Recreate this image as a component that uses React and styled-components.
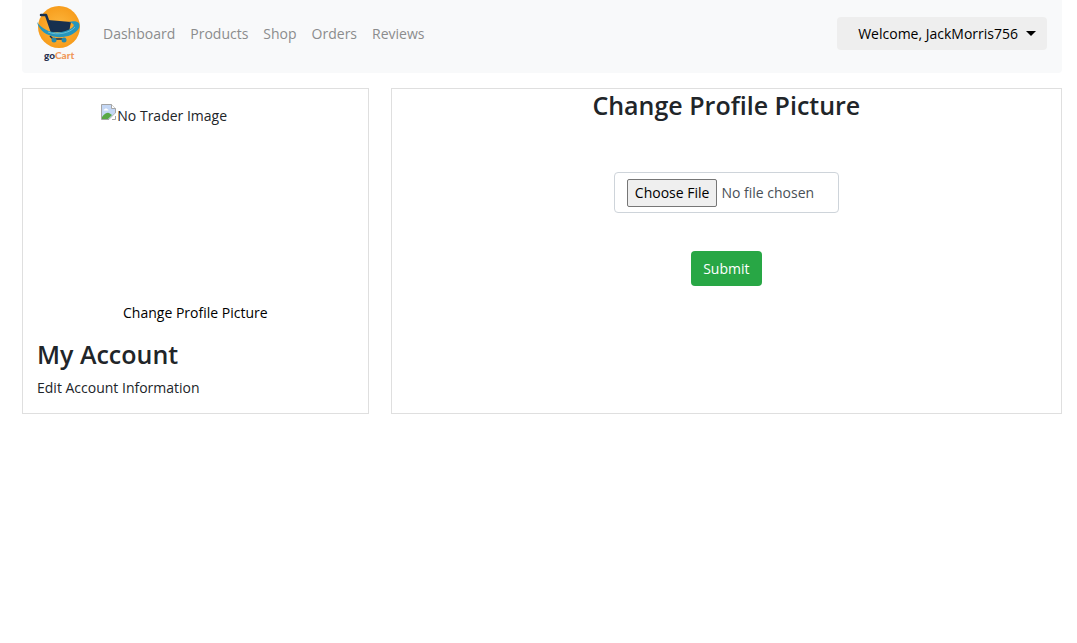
import React from "react";
import styled, { createGlobalStyle } from "styled-components";

const GlobalStyle = createGlobalStyle`
  *, *::before, *::after { box-sizing: border-box; }
  body {
    margin: 0;
    background: #fff;
    color: #212529;
    font-family: "Open Sans", "Noto Sans", sans-serif;
    font-size: 14px;
    font-weight: 400;
    line-height: 22px;
  }
`;

const Page = styled.div`
  padding: 0 15px 0 22px;
`;

const Navbar = styled.nav`
  display: flex;
  align-items: center;
  height: 73px;
  padding: 0 15px 6px;
  background: #f8f9fa;
  border-radius: 0 0 4px 4px;
`;

const Brand = styled.a`
  display: block;
  height: 62px;
  margin-right: 22px;
`;

const NavList = styled.ul`
  display: flex;
  gap: 15px;
  flex: 1;
  margin: 0;
  padding: 0;
  list-style: none;
`;

const NavLink = styled.a`
  color: #8b8c8d;
  text-decoration: none;
`;

const UserButton = styled.button`
  display: flex;
  align-items: center;
  justify-content: flex-end;
  gap: 8px;
  width: 210px;
  height: 33px;
  padding: 0 11px;
  border: 0;
  border-radius: 4px;
  background: #eee;
  color: #000;
  font: inherit;
`;

const Caret = styled.span`
  border: 5px solid transparent;
  border-top-color: #000;
  border-bottom: 0;
`;

const Columns = styled.main`
  display: grid;
  grid-template-columns: calc(100% / 3) 1fr;
  gap: 22px;
  margin-top: 15px;
`;

const Card = styled.section`
  display: flex;
  flex-direction: column;
  align-items: ${(p) => (p.$centered ? "center" : "stretch")};
  min-height: 326px;
  padding: ${(p) => (p.$centered ? "0 14px" : "15px 14px 14px")};
  border: 1px solid #dfdfdf;
`;

const Portrait = styled.div`
  display: flex;
  align-items: flex-start;
  align-self: center;
  width: 188px;
  height: 188px;
  line-height: 24px;
`;

const TextLink = styled.a`
  align-self: ${(p) => (p.$centered ? "center" : "flex-start")};
  margin-top: ${(p) => (p.$centered ? "10px" : "7px")};
  color: ${(p) => (p.$centered ? "#000" : "#212529")};
  text-decoration: none;
`;

const Heading = styled.h2`
  margin: ${(p) => p.$top || "0"} 0 0;
  font-size: 25px;
  font-weight: 600;
  line-height: 32px;
`;

const UploadForm = styled.form`
  display: flex;
  flex-direction: column;
  align-items: center;
  gap: 38px;
  margin-top: 51px;
`;

const FileInput = styled.input`
  width: 225px;
  height: 41px;
  padding: 6px 12px;
  border: 1px solid #ced4da;
  border-radius: 4px;
  background: #fff;
  color: #495057;
  font: inherit;

  &::file-selector-button {
    height: 28px;
    margin: 0 4px 0 0;
    padding: 0 7px;
    border: 1px solid #767676;
    border-radius: 2px;
    background: #efefef;
    color: #000;
    font: inherit;
  }
`;

const SubmitButton = styled.button`
  width: 71px;
  height: 35px;
  padding: 0;
  border: 0;
  border-radius: 4px;
  background: #28a745;
  color: #fff;
  font: inherit;
`;

function Logo() {
  return (
    <svg width="44" height="60" viewBox="0 0 44 60" role="img" aria-label="goCart">
      <defs>
        <radialGradient id="sun">
          <stop offset="0" stopColor="#fdb840" />
          <stop offset="1" stopColor="#f79d1c" />
        </radialGradient>
      </defs>
      <circle cx="22" cy="24" r="21" fill="url(#sun)" />
      <path d="M11 17 L34 19 L32 29 L15 29 Z" fill="#17304f" />
      <path d="M4 12 H9 L15 29" fill="none" stroke="#17304f" strokeWidth="2.500" strokeLinecap="round" strokeLinejoin="round" />
      <path d="M13 33 L16 36 H28" fill="none" stroke="#17304f" strokeWidth="1.500" />
      <path d="M0 19 C7 29 20 32 31 27 C38 24 39 21 32 19 C40 17 44 20 42 25 C38 32 28 35 20 34 C9 33 2 27 0 19 Z" fill="#2596bd" />
      <path d="M11 29 C20 33 33 30 38 24" fill="none" stroke="#68bdd3" strokeWidth="1" />
      <circle cx="17" cy="37" r="2.500" fill="#2789ab" />
      <circle cx="27" cy="37" r="2.500" fill="#2789ab" />
      <text x="7" y="56" fontFamily="Lato, sans-serif" fontSize="10" fontWeight="900" fill="#29304f">
        go<tspan fill="#f0995c">Cart</tspan>
      </text>
    </svg>
  );
}

function BrokenImage() {
  return (
    <svg width="16" height="16" viewBox="0 0 16 16" aria-hidden="true">
      <path d="M.5 .5 H10.500 L14.500 4.500 V9 L8 15.500 H.5 Z" fill="#c4d7f5" stroke="#a5a5a5" />
      <path d="M10.500 .5 V4.500 H14.500" fill="#fff" stroke="#a5a5a5" />
      <path d="M2.500 6.500 Q2.500 5 4 5 Q5 3.500 6 5 Q7.500 5 7.500 6.500 Z" fill="#fff" />
      <path d="M1 15 V13 Q5 8 8 9 L11 11 L7 15 Z" fill="#58a846" />
      <path d="M8 16 L15 9 V11 L10 16 Z" fill="#fff" />
      <path d="M11 15.500 H14.500 V12" fill="none" stroke="#a5a5a5" />
    </svg>
  );
}

const links = ["Dashboard", "Products", "Shop", "Orders", "Reviews"];

export default function App() {
  return (
    <>
      <GlobalStyle />
      <Page>
        <Navbar>
          <Brand href="#home"><Logo /></Brand>
          <NavList>
            {links.map((label) => (
              <li key={label}><NavLink href={`#${label.toLowerCase()}`}>{label}</NavLink></li>
            ))}
          </NavList>
          <UserButton type="button" aria-haspopup="menu">
            Welcome, JackMorris756
            <Caret />
          </UserButton>
        </Navbar>
        <Columns>
          <Card>
            <Portrait><BrokenImage /><span>No Trader Image</span></Portrait>
            <TextLink href="#picture" $centered>Change Profile Picture</TextLink>
            <Heading $top="14px">My Account</Heading>
            <TextLink href="#account">Edit Account Information</TextLink>
          </Card>
          <Card $centered>
            <Heading>Change Profile Picture</Heading>
            <UploadForm onSubmit={(e) => e.preventDefault()}>
              <FileInput type="file" aria-label="Profile picture" />
              <SubmitButton type="submit">Submit</SubmitButton>
            </UploadForm>
          </Card>
        </Columns>
      </Page>
    </>
  );
}
